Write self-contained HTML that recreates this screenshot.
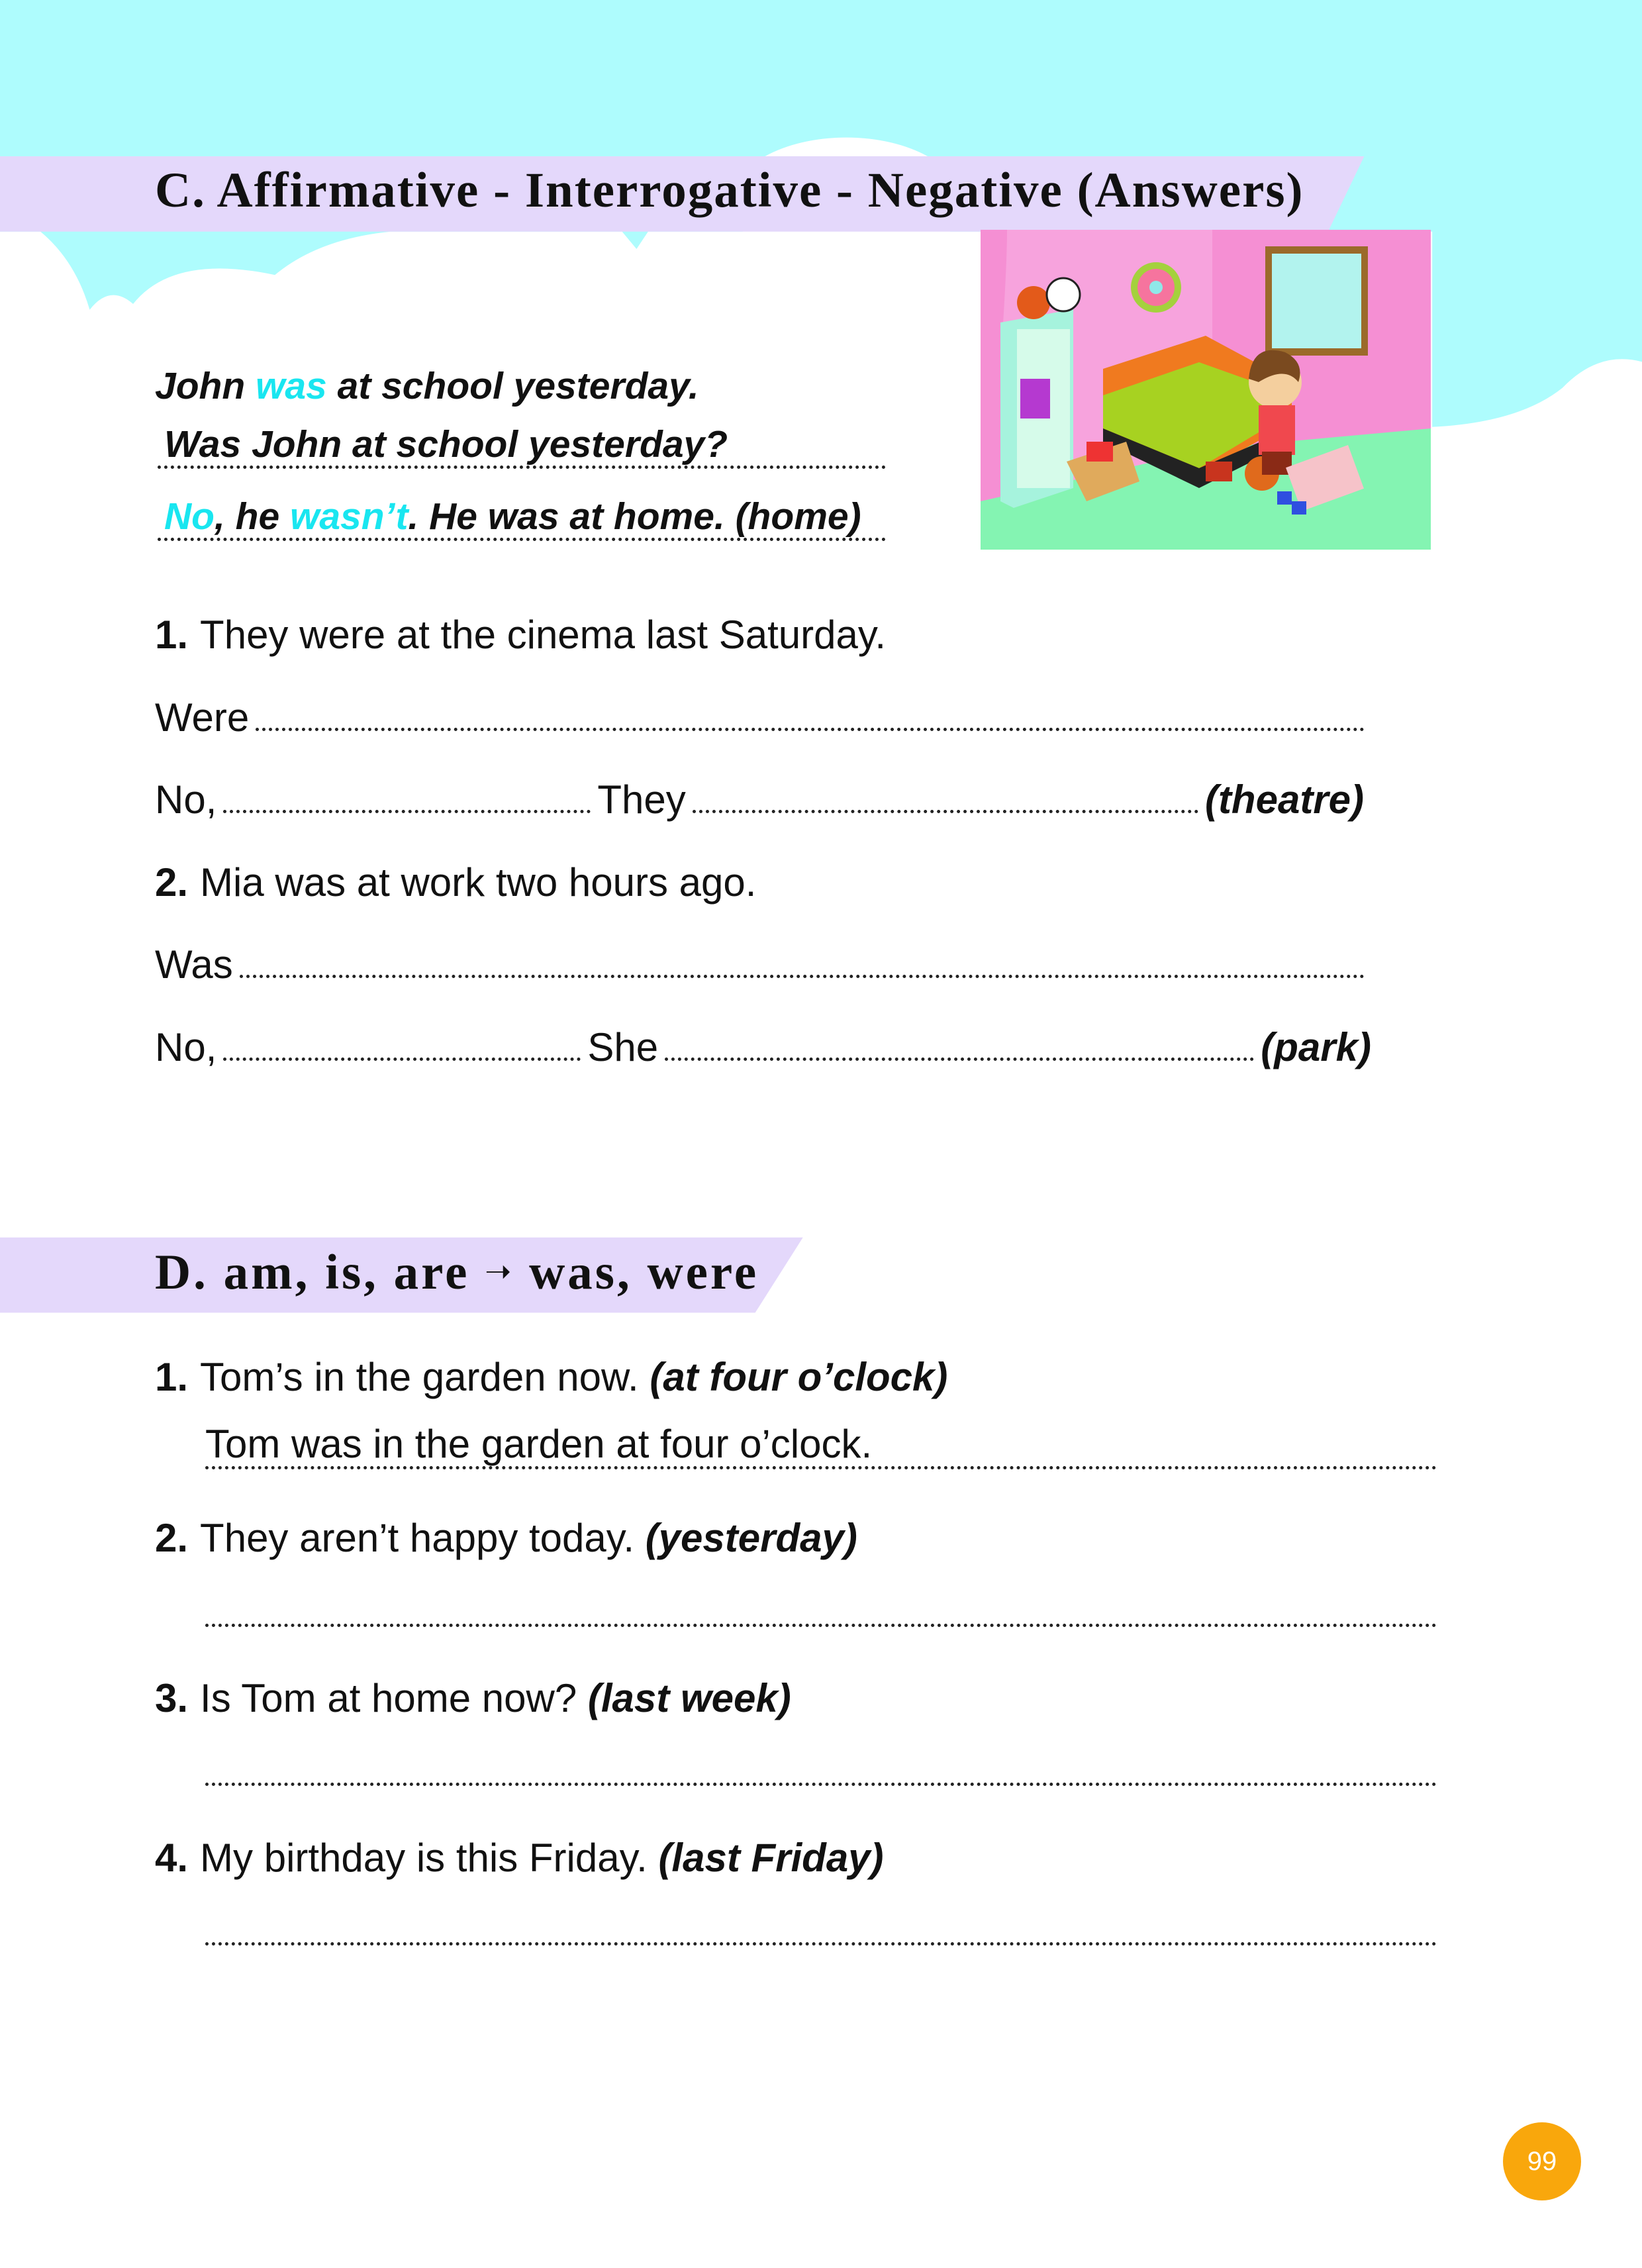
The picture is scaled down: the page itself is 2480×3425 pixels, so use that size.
<!DOCTYPE html>
<html><head><meta charset="utf-8"><style>
*{margin:0;padding:0;box-sizing:border-box}
body{width:2480px;height:3425px;position:relative;background:#fff;overflow:hidden;font-family:"Liberation Sans",sans-serif;color:#111}
.l{position:absolute;left:234px;font-size:60px;line-height:74px;white-space:nowrap;display:flex;align-items:baseline}
.bi{font-weight:bold;font-style:italic}
.c{color:#19e6f0}
.f{display:inline-block;height:0;border-bottom:5px dotted #222;margin:0 10px}
.fx{flex:1}
.n{font-weight:bold;margin-right:18px}
.t{position:absolute;left:234px;font-family:"Liberation Serif",serif;font-weight:bold;font-size:75px;line-height:84px;letter-spacing:2px;white-space:nowrap}
.dl{position:absolute;height:0;border-bottom:5px dotted #222}
</style></head><body>
<svg style="position:absolute;left:0;top:0" width="2480" height="3425" viewBox="0 0 1135 1567" preserveAspectRatio="none">
<rect x="0" y="0" width="1135" height="320" fill="#aefcfd"/>
<ellipse cx="585" cy="140" rx="80" ry="45" fill="#fff"/>
<path d="M0 160 L28 160 Q52 180 62 214 Q76 196 92 210 Q120 175 190 190 Q220 165 270 160 L430 160 L440 172 L448 160 L990 160 L990 295 Q1050 292 1080 268 Q1105 242 1135 250 V1567 H0 Z" fill="#fff"/>
<polygon points="0,108 943,108 918,160 0,160" fill="#e4d8fb"/>
<polygon points="0,855 555,855 522,907 0,907" fill="#e4d8fb"/>
</svg>
<div class="t" style="top:246px">C. Affirmative - Interrogative - Negative (Answers)</div>
<div class="t" style="top:1878px;letter-spacing:4px">D. am, is, are <span style="font-family:'DejaVu Sans';font-size:48px;vertical-align:10px">➝</span> was, were</div>

<svg style="position:absolute;left:1481px;top:347px" width="680" height="483" viewBox="0 0 680 483">
<rect width="680" height="483" fill="#f58fd3"/>
<path d="M0 0 H350 V330 L0 420 Z" fill="#f7a3dd"/>
<path d="M0 0 H40 Q40 60 30 200 V420 L0 430Z" fill="#f58fd3"/>
<polygon points="0,410 350,330 680,300 680,483 0,483" fill="#84f4b2"/>
<rect x="430" y="25" width="155" height="165" fill="#9b6a2a"/>
<rect x="440" y="36" width="135" height="143" fill="#b2f3ee"/>
<circle cx="265" cy="87" r="38" fill="#a4d13d"/><circle cx="265" cy="87" r="28" fill="#f6749e"/><circle cx="265" cy="87" r="10" fill="#8fe8e8"/>
<polygon points="30,140 140,120 140,390 50,420 30,410" fill="#a6f3dd"/>
<rect x="55" y="150" width="80" height="240" fill="#d6fbea"/>
<circle cx="80" cy="110" r="25" fill="#e35a1a"/><circle cx="125" cy="98" r="25" fill="#fff" stroke="#222" stroke-width="3"/>
<rect x="60" y="225" width="45" height="60" fill="#b539d0"/>
<polygon points="185,210 340,160 470,230 470,290 330,370 185,300" fill="#f07a1f"/>
<polygon points="185,250 330,200 470,250 430,300 330,360 185,300" fill="#a7d221"/>
<polygon points="185,300 330,360 470,300 470,320 330,390 185,320" fill="#222"/>
<polygon points="130,350 220,320 240,380 160,410" fill="#e0aa5c"/>
<rect x="160" y="320" width="40" height="30" fill="#e33"/>
<circle cx="425" cy="368" r="26" fill="#e06a1c"/>
<circle cx="445" cy="230" r="40" fill="#f4cf9e"/><path d="M405 225 Q410 170 460 185 Q490 200 480 230 Q460 205 420 230Z" fill="#7a4a1f"/>
<rect x="420" y="265" width="55" height="75" fill="#f0484e"/>
<rect x="425" y="335" width="45" height="35" fill="#8a2a16"/>
<rect x="470" y="340" width="100" height="70" fill="#f6c3c9" transform="rotate(-20 520 375)"/>
<rect x="448" y="395" width="22" height="20" fill="#2f4fe0"/><rect x="470" y="410" width="22" height="20" fill="#2f4fe0"/>
<rect x="340" y="350" width="40" height="30" fill="#c8341e"/>
</svg>

<div class="l bi" style="top:546px;font-size:57px">John&nbsp;<span class="c">was</span>&nbsp;at school yesterday.</div>
<div class="l bi" style="top:634px;left:248px;font-size:57px">Was John at school yesterday?</div>
<div class="dl" style="left:238px;width:1100px;top:703px"></div>
<div class="l bi" style="top:743px;left:248px;font-size:57px"><span class="c">No</span>, he&nbsp;<span class="c">wasn’t</span>. He was at home. (home)</div>
<div class="dl" style="left:238px;width:1100px;top:812px"></div>

<div class="l" style="top:922px"><span class="n">1.</span>They were at the cinema last Saturday.</div>
<div class="l" style="top:1047px;width:1837px">Were<span class="f fx"></span></div>
<div class="l" style="top:1171px;width:1826px">No,<span class="f" style="width:555px"></span>They<span class="f fx"></span><span class="bi">(theatre)</span></div>
<div class="l" style="top:1296px"><span class="n">2.</span>Mia was at work two hours ago.</div>
<div class="l" style="top:1420px;width:1837px">Was<span class="f fx"></span></div>
<div class="l" style="top:1545px;width:1837px">No,<span class="f" style="width:540px"></span>She<span class="f fx"></span><span class="bi">(park)</span></div>

<div class="l" style="top:2043px"><span class="n">1.</span>Tom’s in the garden now.&nbsp;<span class="bi">(at four o’clock)</span></div>
<div class="l" style="top:2144px;left:310px">Tom was in the garden at four o’clock.</div>
<div class="dl" style="left:310px;width:1860px;top:2214px"></div>
<div class="l" style="top:2286px"><span class="n">2.</span>They aren’t happy today.&nbsp;<span class="bi">(yesterday)</span></div>
<div class="dl" style="left:310px;width:1860px;top:2452px"></div>
<div class="l" style="top:2528px"><span class="n">3.</span>Is Tom at home now?&nbsp;<span class="bi">(last week)</span></div>
<div class="dl" style="left:310px;width:1860px;top:2692px"></div>
<div class="l" style="top:2769px"><span class="n">4.</span>My birthday is this Friday.&nbsp;<span class="bi">(last Friday)</span></div>
<div class="dl" style="left:310px;width:1860px;top:2933px"></div>

<div style="position:absolute;left:2270px;top:3205px;width:118px;height:118px;border-radius:50%;background:#f9a70c;color:#fff;font-size:40px;line-height:118px;text-align:center">99</div>
</body></html>
